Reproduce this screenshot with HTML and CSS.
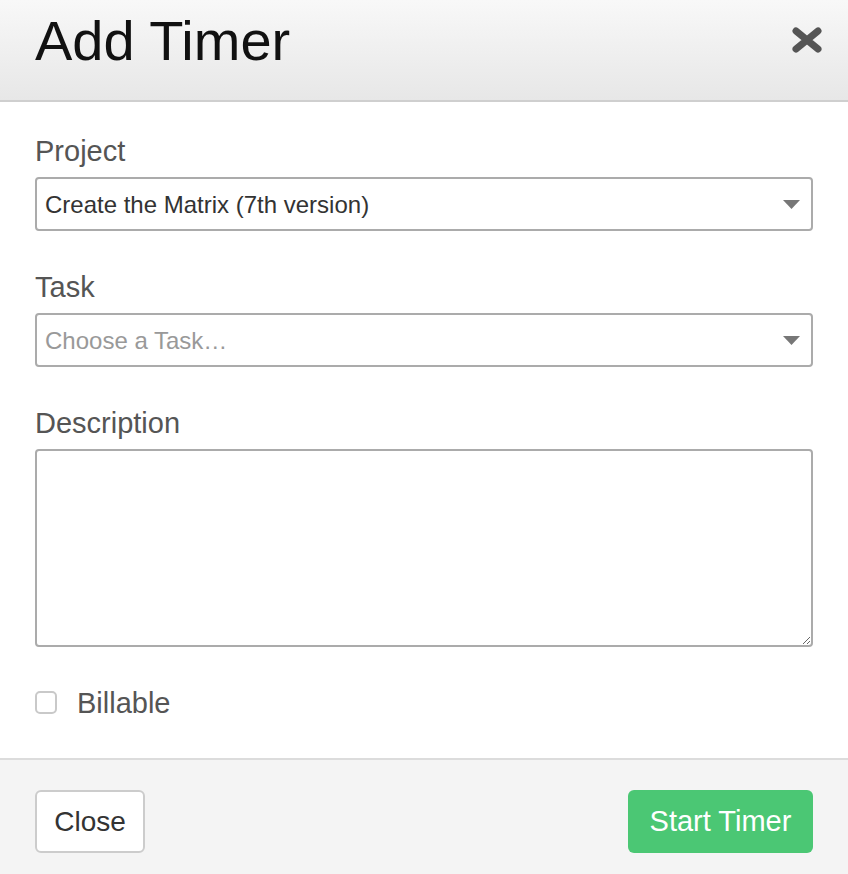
FILE: index.html
```html
<!DOCTYPE html>
<html>
<head>
<meta charset="utf-8">
<link rel="stylesheet" href="styles.css">
</head>
<body>
<div class="modal">
  <header class="modal-header">
    <h1 class="title">Add Timer</h1>
    <button class="close-x" aria-label="Close">
      <svg width="30" height="26" viewBox="0 0 30 26"><path d="M4 4 L26 22 M26 4 L4 22" stroke="#555" stroke-width="7" stroke-linecap="round" fill="none"/></svg>
    </button>
  </header>
  <main class="modal-body">
    <div class="field">
      <label class="label">Project</label>
      <div class="select">
        <span class="select-text">Create the Matrix (7th version)</span>
        <svg class="caret" width="17" height="9" viewBox="0 0 17 9"><path d="M0 0 H17 L8.5 9 Z" fill="#777"/></svg>
      </div>
    </div>
    <div class="field">
      <label class="label">Task</label>
      <div class="select">
        <span class="select-text placeholder">Choose a Task…</span>
        <svg class="caret" width="17" height="9" viewBox="0 0 17 9"><path d="M0 0 H17 L8.5 9 Z" fill="#777"/></svg>
      </div>
    </div>
    <div class="field field-last">
      <label class="label">Description</label>
      <textarea class="textarea"></textarea>
    </div>
    <div class="check-row">
      <span class="checkbox"></span>
      <span class="check-label">Billable</span>
    </div>
  </main>
  <footer class="modal-footer">
    <button class="btn btn-default">Close</button>
    <button class="btn btn-primary">Start Timer</button>
  </footer>
</div>
</body>
</html>
```
FILE: styles.css
```css
html, body {
  margin: 0;
  padding: 0;
  background: #fff;
}
body {
  font-family: "Liberation Sans", Arial, sans-serif;
  width: 848px;
  height: 874px;
  overflow: hidden;
}
.modal {
  display: flex;
  flex-direction: column;
  height: 874px;
}
.modal-header {
  box-sizing: border-box;
  height: 102px;
  border-bottom: 2px solid #cfcfcf;
  background: linear-gradient(#f8f8f8, #e7e7e7);
  display: flex;
  justify-content: space-between;
  align-items: flex-start;
  padding: 0 26px 0 35px;
  flex: none;
}
.title {
  margin: 13px 0 0 0;
  font-size: 56px;
  line-height: 56px;
  font-weight: normal;
  color: #111;
}
.close-x {
  margin-top: 27px;
  padding: 0;
  border: 0;
  background: none;
  width: 30px;
  height: 26px;
  display: block;
}
.close-x svg { display: block; }
.modal-body {
  padding: 32px 35px 44px 35px;
  display: flex;
  flex-direction: column;
  flex: none;
}
.field {
  display: flex;
  flex-direction: column;
  margin-bottom: 39px;
}
.field-last { margin-bottom: 44px; }
.label {
  font-size: 29px;
  line-height: 34px;
  color: #555;
  margin-bottom: 9px;
}
.select {
  height: 54px;
  box-sizing: border-box;
  border: 2px solid #ababab;
  border-radius: 4px;
  display: flex;
  align-items: center;
  justify-content: space-between;
  padding: 0 11px 0 8px;
  background: #fff;
}
.select-text {
  font-size: 24px;
  color: #333;
  padding-top: 2px;
}
.placeholder { color: #999; }
.caret { display: block; }
.textarea {
  height: 198px;
  box-sizing: border-box;
  border: 2px solid #ababab;
  border-radius: 4px;
  margin: 0;
  padding: 8px;
  font-family: inherit;
  font-size: 24px;
  resize: vertical;
  display: block;
  width: 100%;
}
.check-row {
  display: flex;
  align-items: center;
  height: 23px;
}
.checkbox {
  width: 22px;
  height: 23px;
  box-sizing: border-box;
  border: 2px solid #c9c9c9;
  border-radius: 5px;
  background: #fff;
  margin-right: 20px;
  flex: none;
}
.check-label {
  font-size: 29px;
  color: #555;
  line-height: 30px;
  padding-top: 1px;
}
.modal-footer {
  flex: 1;
  border-top: 2px solid #dcdcdc;
  background: #f4f4f4;
  display: flex;
  justify-content: space-between;
  align-items: flex-start;
  padding: 30px 35px 0 35px;
}
.btn {
  height: 63px;
  box-sizing: border-box;
  font-family: "Liberation Sans", Arial, sans-serif;
  font-size: 28px;
  border-radius: 6px;
  padding: 0;
  cursor: pointer;
}
.btn-default {
  width: 110px;
  background: #fff;
  border: 2px solid #cccccc;
  color: #333;
}
.btn-primary {
  width: 185px;
  background: #4bc774;
  border: 0;
  color: #fff;
  font-size: 29px;
}
```
